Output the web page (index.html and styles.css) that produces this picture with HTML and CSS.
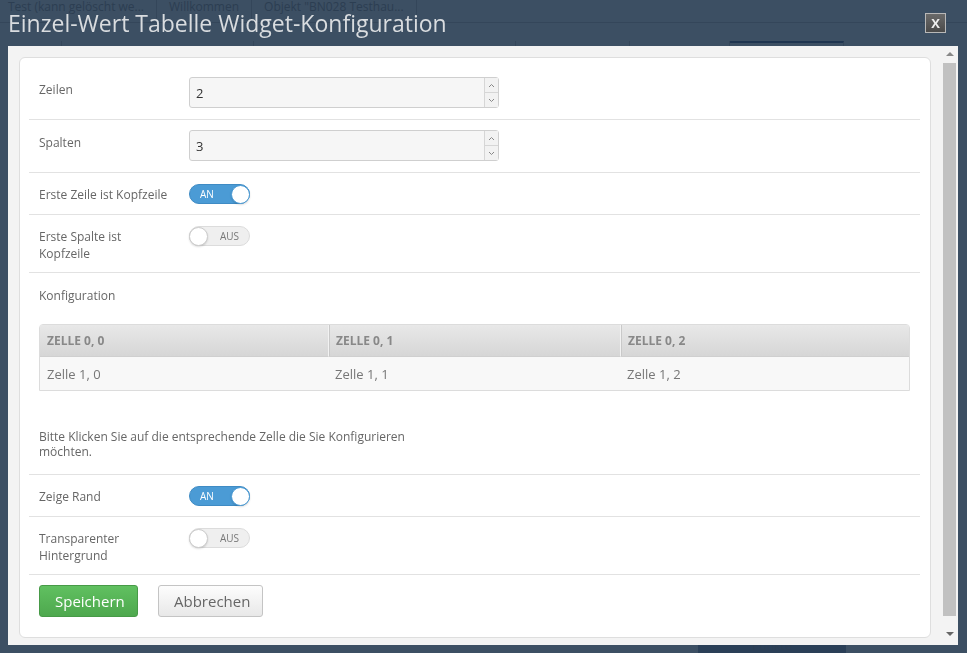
FILE: index.html
```html
<!DOCTYPE html>
<html lang="de">
<head>
    <meta charset="UTF-8">
    <title>Einzel-Wert Tabelle Widget-Konfiguration</title>
    <link rel="stylesheet" href="styles.css">
</head>
<body>
    <div class="page">
        <div class="page-tabs">
            <span class="page-tab">Test (kann gelöscht we...</span>
            <span class="page-tab">Willkommen</span>
            <span class="page-tab">Objekt "BN028 Testhau...</span>
        </div>
        <div class="page-subtabs">
            <span class="page-subtab w1"></span>
            <span class="page-subtab w2"></span>
            <span class="page-subtab w3"></span>
            <span class="page-subtab w4"></span>
            <span class="page-subtab w5"></span>
            <span class="page-subtab w6 active"></span>
        </div>
        <div class="page-footer">
            <span class="page-footer-btn">Punkte</span>
        </div>
    </div>

    <div class="modal">
        <div class="modal-header">
            <h1 class="modal-title">Einzel-Wert Tabelle Widget-Konfiguration</h1>
            <button class="modal-close">X</button>
        </div>
        <div class="modal-body">
            <div class="card">
                <div class="form-row first">
                    <label class="form-label">Zeilen</label>
                    <div class="number-input">
                        <span class="number-value">2</span>
                        <span class="spin">
                            <span class="spin-btn"><svg width="7" height="5" viewBox="0 0 7 5"><path d="M1 4 L3.5 1.5 L6 4" fill="none" stroke="#888" stroke-width="1"/></svg></span>
                            <span class="spin-btn"><svg width="7" height="5" viewBox="0 0 7 5"><path d="M1 1 L3.5 3.5 L6 1" fill="none" stroke="#888" stroke-width="1"/></svg></span>
                        </span>
                    </div>
                </div>
                <div class="form-row">
                    <label class="form-label">Spalten</label>
                    <div class="number-input">
                        <span class="number-value">3</span>
                        <span class="spin">
                            <span class="spin-btn"><svg width="7" height="5" viewBox="0 0 7 5"><path d="M1 4 L3.5 1.5 L6 4" fill="none" stroke="#888" stroke-width="1"/></svg></span>
                            <span class="spin-btn"><svg width="7" height="5" viewBox="0 0 7 5"><path d="M1 1 L3.5 3.5 L6 1" fill="none" stroke="#888" stroke-width="1"/></svg></span>
                        </span>
                    </div>
                </div>
                <div class="form-row toggle-row">
                    <label class="form-label">Erste Zeile ist Kopfzeile</label>
                    <span class="switch on"><span class="switch-text">AN</span><span class="knob"></span></span>
                </div>
                <div class="form-row toggle-row">
                    <label class="form-label">Erste Spalte ist Kopfzeile</label>
                    <span class="switch off"><span class="knob"></span><span class="switch-text">AUS</span></span>
                </div>
                <div class="config-section">
                    <div class="config-title">Konfiguration</div>
                    <table class="cell-table">
                        <thead>
                            <tr>
                                <th class="col-a">Zelle 0, 0</th>
                                <th class="col-b">Zelle 0, 1</th>
                                <th>Zelle 0, 2</th>
                            </tr>
                        </thead>
                        <tbody>
                            <tr>
                                <td>Zelle 1, 0</td>
                                <td>Zelle 1, 1</td>
                                <td>Zelle 1, 2</td>
                            </tr>
                        </tbody>
                    </table>
                    <p class="config-hint">Bitte Klicken Sie auf die entsprechende Zelle die Sie Konfigurieren möchten.</p>
                </div>
                <div class="form-row toggle-row">
                    <label class="form-label">Zeige Rand</label>
                    <span class="switch on"><span class="switch-text">AN</span><span class="knob"></span></span>
                </div>
                <div class="form-row toggle-row">
                    <label class="form-label">Transparenter Hintergrund</label>
                    <span class="switch off"><span class="knob"></span><span class="switch-text">AUS</span></span>
                </div>
                <div class="actions">
                    <button class="btn btn-save">Speichern</button>
                    <button class="btn btn-cancel">Abbrechen</button>
                </div>
            </div>
            <div class="scrollbar">
                <span class="scroll-arrow up"></span>
                <div class="scroll-thumb"></div>
                <span class="scroll-arrow down"></span>
            </div>
        </div>
    </div>
</body>
</html>
```

FILE: styles.css
```css
* {
    box-sizing: border-box;
}

body {
    margin: 0;
    height: 653px;
    overflow: hidden;
    background: #3c4f63;
    font-family: 'Open Sans', sans-serif;
    color: #666;
}

/* page behind the dialog */

.page {
    height: 653px;
    display: flex;
    flex-direction: column;
}

.page-tabs {
    display: flex;
    height: 23px;
    border-bottom: 1px solid #34465a;
    padding-left: 8px;
}

.page-tab {
    font-size: 12px;
    color: #2c3e52;
    padding: 0 12px 0 0;
    margin-right: 12px;
    border-right: 1px solid #34465a;
    line-height: 13px;
    height: 22px;
}

.page-subtabs {
    display: flex;
    height: 19px;
    margin-top: 18px;
}

.page-subtab {
    border-right: 1px solid #34465a;
    height: 19px;
}

.page-subtab.w1 { width: 62px; }
.page-subtab.w2 { width: 192px; }
.page-subtab.w3 { width: 262px; }
.page-subtab.w4 { width: 114px; }
.page-subtab.w5 { width: 100px; }
.page-subtab.w6 { width: 114px; }
.page-subtab.active {
    border-top: 2px solid #1f3550;
}

.page-footer {
    margin-top: auto;
    height: 10px;
    padding-left: 698px;
}

.page-footer-btn {
    display: block;
    width: 148px;
    height: 10px;
    background: #2a3f57;
    border-top: 1px solid #1f3550;
    color: #2c3e52;
    font-size: 12px;
    line-height: 4px;
    text-align: center;
    overflow: hidden;
}

/* dialog */

.modal {
    position: fixed;
    left: 8px;
    top: 0;
    width: 950px;
}

.modal-header {
    height: 46px;
    display: flex;
    justify-content: space-between;
    align-items: flex-start;
}

.modal-title {
    margin: 8px 0 0;
    font-size: 23px;
    font-weight: normal;
    color: #d9dcdf;
    line-height: 31px;
}

.modal-close {
    margin: 13px 12px 0 0;
    width: 21px;
    height: 20px;
    padding: 0;
    border: 1px solid #b8b8b8;
    background: linear-gradient(#6a6a6a, #4a4a4a);
    color: #eee;
    font-family: 'Open Sans', sans-serif;
    font-weight: bold;
    font-size: 13px;
    line-height: 17px;
}

.modal-body {
    height: 599px;
    background: #f3f3f3;
    display: flex;
}

.card {
    width: 912px;
    height: 581px;
    margin: 11px 0 0 11px;
    background: #fff;
    border: 1px solid #dedede;
    border-radius: 6px;
    padding: 0 10px 0 9px;
    overflow: hidden;
}

.form-row {
    display: flex;
    align-items: flex-start;
    border-bottom: 1px solid #e2e2e2;
    padding: 10px 10px 11px;
}

.form-row.first {
    padding-top: 19px;
}

.form-label {
    width: 150px;
    padding-right: 20px;
    font-size: 12px;
    line-height: 17px;
    color: #666;
    flex-shrink: 0;
    padding-top: 4px;
}

.toggle-row {
    padding-top: 11px;
    padding-bottom: 10px;
}

.toggle-row .form-label {
    padding-top: 2px;
}

.number-input {
    width: 310px;
    height: 31px;
    border: 1px solid #cfcfcf;
    border-radius: 3px;
    background: #f6f6f6;
    display: flex;
    justify-content: space-between;
}

.number-value {
    font-size: 13px;
    color: #333;
    padding: 6px 0 0 6px;
}

.spin {
    display: flex;
    flex-direction: column;
    width: 14px;
    border-left: 1px solid #d6d6d6;
}

.spin-btn {
    flex: 1;
    display: flex;
    align-items: center;
    justify-content: center;
    background: #f2f2f2;
}

.spin-btn + .spin-btn {
    border-top: 1px solid #d6d6d6;
}

.switch {
    width: 61px;
    height: 20px;
    border-radius: 10px;
    display: flex;
    align-items: center;
    justify-content: space-between;
    flex-shrink: 0;
}

.switch.on {
    background: #4b9bd5;
    border: 1px solid #3f8bc4;
    padding-left: 10px;
}

.switch.off {
    background: #efefef;
    border: 1px solid #dcdcdc;
    padding-right: 10px;
}

.switch-text {
    font-size: 10px;
    line-height: 10px;
}

.switch.on .switch-text {
    color: #fff;
}

.switch.off .switch-text {
    color: #777;
}

.knob {
    width: 19px;
    height: 19px;
    border-radius: 50%;
    background: #fff;
    border: 1px solid #ccc;
    box-shadow: 0 1px 2px rgba(0,0,0,0.15);
}

.switch.on .knob {
    margin-right: -1px;
    border-color: #4b9bd5;
}

.switch.off .knob {
    margin-left: -1px;
}

.config-section {
    border-bottom: 1px solid #e2e2e2;
    padding: 14px 10px 15px;
}

.config-title {
    font-size: 12px;
    line-height: 17px;
    color: #666;
    margin-bottom: 20px;
}

.cell-table {
    width: 100%;
    border-collapse: separate;
    border-spacing: 0;
    border: 1px solid #dcdcdc;
    border-radius: 4px 4px 0 0;
    table-layout: fixed;
}

.cell-table th {
    height: 32px;
    text-align: left;
    padding: 0 7px;
    font-size: 12px;
    font-weight: bold;
    text-transform: uppercase;
    color: #888;
    background: linear-gradient(#e8e8e8, #d6d6d6);
    border-bottom: 1px solid #cfcfcf;
}

.cell-table th.col-a {
    width: 288px;
}

.cell-table th.col-b {
    width: 292px;
}

.cell-table th + th {
    border-left: 1px solid #f2f2f2;
    box-shadow: inset 1px 0 0 #c9c9c9;
}

.cell-table td {
    height: 33px;
    padding: 0 7px;
    font-size: 13px;
    color: #777;
    background: #f8f8f8;
}

.config-hint {
    width: 390px;
    margin: 38px 0 0;
    font-size: 12px;
    line-height: 15px;
    color: #666;
}

.actions {
    padding: 10px 10px;
    display: flex;
    gap: 20px;
}

.btn {
    height: 32px;
    border-radius: 3px;
    font-family: 'Open Sans', sans-serif;
    font-size: 15px;
    padding: 0 15px;
    cursor: pointer;
}

.btn-save {
    width: 99px;
    background: linear-gradient(#60c060, #4ea84e);
    border: 1px solid #479a47;
    color: #fff;
}

.btn-cancel {
    width: 105px;
    background: linear-gradient(#fdfdfd, #e8e8e8);
    border: 1px solid #c4c4c4;
    color: #666;
}

/* scrollbar */

.scrollbar {
    width: 15px;
    margin-left: 11px;
    display: flex;
    flex-direction: column;
    align-items: center;
}

.scroll-arrow {
    width: 0;
    height: 0;
    border-left: 4px solid transparent;
    border-right: 4px solid transparent;
}

.scroll-arrow.up {
    margin-top: 6px;
    border-bottom: 4px solid #888;
}

.scroll-arrow.down {
    margin-top: 16px;
    border-top: 4px solid #666;
}

.scroll-thumb {
    width: 13px;
    height: 553px;
    margin-top: 7px;
    background: #c1c1c1;
}
```
